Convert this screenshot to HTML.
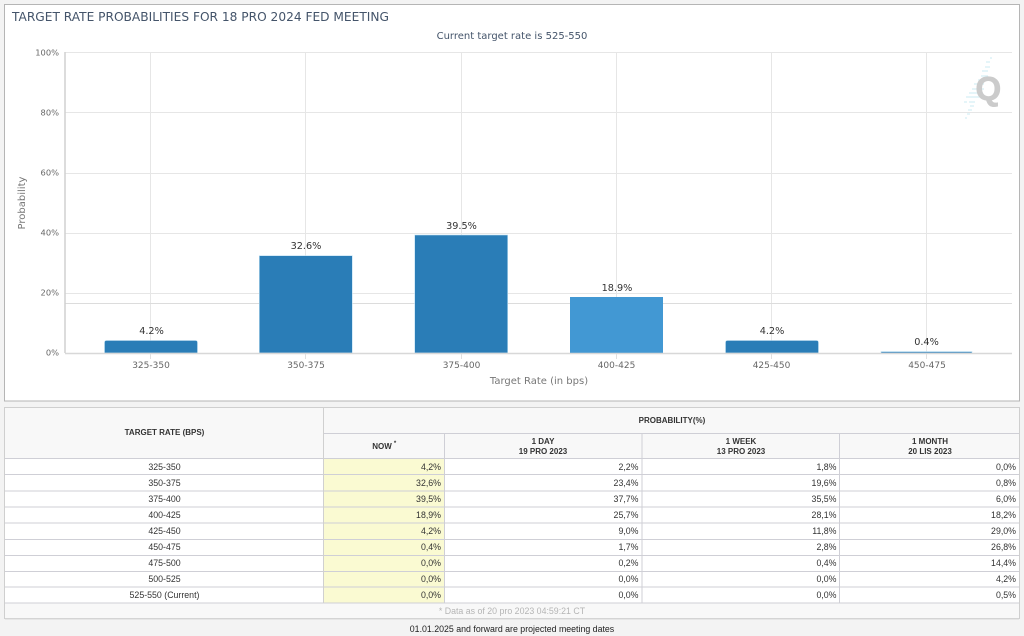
<!DOCTYPE html>
<html>
<head>
<meta charset="utf-8">
<style>
html,body{margin:0;padding:0;width:1024px;height:636px;overflow:hidden;background:#f3f3f3}
svg{display:block;filter:blur(.35px)}
.d{font-family:"DejaVu Sans",sans-serif}
.l{font-family:"Liberation Sans",sans-serif}
.r{font-size:8.8px;fill:#333;text-anchor:end;font-family:"Liberation Sans",sans-serif}
.c{font-size:8.8px;fill:#333;text-anchor:middle;font-family:"Liberation Sans",sans-serif}
.h{font-size:8px;font-weight:bold;fill:#333;text-anchor:middle;font-family:"Liberation Sans",sans-serif}
.y{font-size:8.3px;fill:#666;text-anchor:end;font-family:"DejaVu Sans",sans-serif}
.x{font-size:9px;fill:#666;text-anchor:middle;font-family:"DejaVu Sans",sans-serif}
.v{font-size:9.7px;fill:#333;text-anchor:middle;font-family:"DejaVu Sans",sans-serif}
</style>
</head>
<body>
<svg width="1024" height="636" viewBox="0 0 1024 636" xmlns="http://www.w3.org/2000/svg">
<rect x="0" y="0" width="1024" height="636" fill="#f3f3f3"/>
<!-- chart panel -->
<rect x="4.5" y="4.5" width="1015" height="396.5" fill="#fff" stroke="#b5b5b5"/>
<text class="d" x="12" y="21" font-size="12.2px" fill="#44546a">TARGET RATE PROBABILITIES FOR 18 PRO 2024 FED MEETING</text>
<text class="d" x="512" y="39" font-size="10px" fill="#44546a" text-anchor="middle">Current target rate is 525-550</text>
<!-- grid -->
<g stroke="#e6e6e6" stroke-width="1" fill="none">
<path d="M65 52.5H1012M65 112.5H1012M65 173.5H1012M65 233.5H1012M65 293.5H1012"/>
<path d="M150.5 52V353M305.5 52V353M461.5 52V353M616.5 52V353M771.5 52V353M926.5 52V353"/>
</g>
<path d="M65.5 303.5H1012" stroke="#dcdcdc" fill="none"/>
<path d="M65 52V353" stroke="#d0d0d0" stroke-width="1.5" fill="none"/>
<!-- watermark -->
<g stroke="#d5eff5" stroke-width="1.2" fill="none">
<path d="M990 58h2M986 62h4M985 67h5M982 71h6M981 76h7M978 80h7M974 84h10M972 89h12M969 93h14M966 97h14M964 102h3M969 102h6M970 106h4M968 110h4M967 114h3M965 118h2"/>
</g>
<text class="l" x="975.500" y="100" font-size="33px" font-weight="bold" fill="#cbcbcb" stroke="#cbcbcb" stroke-width=".8">Q</text>
<!-- bars -->
<g fill="#2a7db7" stroke="#bfe0f2" stroke-width=".6">
<path d="M104.5 353V342.5q0-2 2-2H195.5q2 0 2 2V353z"/>
<rect x="259.3" y="255.7" width="93" height="97.3"/>
<rect x="414.7" y="235" width="93" height="118"/>
<path d="M725.5 353V342.5q0-2 2-2H816.5q2 0 2 2V353z"/>
<rect x="881" y="351.6" width="91" height="1.4"/>
</g>
<rect x="570" y="297" width="93" height="56" fill="#4298d3"/>
<path d="M65 353.5H1012" stroke="#d8d8d8" stroke-width="1.5" fill="none"/>
<path d="M150.5 354v5M305.5 354v5M461.5 354v5M616.5 354v5M771.5 354v5M926.5 354v5" stroke="#e0e0e0" fill="none"/>
<!-- labels -->
<text class="v" x="151.500" y="334">4.2%</text>
<text class="v" x="306" y="249">32.6%</text>
<text class="v" x="461.5" y="229">39.5%</text>
<text class="v" x="617" y="291">18.9%</text>
<text class="v" x="772" y="334">4.2%</text>
<text class="v" x="926.5" y="345">0.4%</text>
<text class="y" x="59" y="55.500">100%</text>
<text class="y" x="59" y="115.500">80%</text>
<text class="y" x="59" y="175.500">60%</text>
<text class="y" x="59" y="235.500">40%</text>
<text class="y" x="59" y="295.500">20%</text>
<text class="y" x="59" y="355.500">0%</text>
<text class="x" x="151" y="368">325-350</text>
<text class="x" x="306" y="368">350-375</text>
<text class="x" x="461.5" y="368">375-400</text>
<text class="x" x="616.5" y="368">400-425</text>
<text class="x" x="771.5" y="368">425-450</text>
<text class="x" x="927" y="368">450-475</text>
<text class="d" x="539" y="384" font-size="10px" fill="#777" text-anchor="middle">Target Rate (in bps)</text>
<text class="d" transform="translate(25,203) rotate(-90)" font-size="10px" fill="#777" text-anchor="middle">Probability</text>
<!-- table -->
<rect x="4.5" y="407.5" width="1015" height="211" fill="#fff"/>
<rect x="5" y="408" width="1014" height="50.5" fill="#f8f8f8"/>
<rect x="5" y="603" width="1014" height="15.5" fill="#f8f8f8"/>
<rect x="324" y="459" width="120.5" height="144" fill="#fafad2"/>
<g stroke="#cfcfd6" fill="none">
<rect x="4.5" y="407.5" width="1015" height="211" stroke="#cfcfcf"/>
<path d="M324 433.5H1019"/>
<path d="M5 458.5H1019M5 474.5H1019M5 491H1019M5 507H1019M5 523H1019M5 539.5H1019M5 555.5H1019M5 571.5H1019M5 587H1019M5 603H1019" stroke-width="1.1"/>
<path d="M323.5 407V603M444.5 433V603M642 433V603M839.5 433V603"/>
</g>
<path d="M323.5 407V603" stroke="#d0d0d0" fill="none"/>
<path d="M5 619H1019" stroke="#d8d8d8" fill="none"/>
<text class="h" x="164.500" y="435">TARGET RATE (BPS)</text>
<text class="h" x="672" y="423">PROBABILITY(%)</text>
<text class="h" x="382" y="449">NOW</text>
<text class="h" x="395" y="445" style="font-size:6px">*</text>
<text class="h" x="543" y="444">1 DAY</text>
<text class="h" x="543" y="454">19 PRO 2023</text>
<text class="h" x="741" y="444">1 WEEK</text>
<text class="h" x="741" y="454">13 PRO 2023</text>
<text class="h" x="930" y="444">1 MONTH</text>
<text class="h" x="930" y="454">20 LIS 2023</text>

<text class="c" x="164.500" y="470">325-350</text><text class="r" x="441" y="470">4,2%</text><text class="r" x="638.500" y="470">2,2%</text><text class="r" x="836.500" y="470">1,8%</text><text class="r" x="1016" y="470">0,0%</text>
<text class="c" x="164.500" y="486">350-375</text><text class="r" x="441" y="486">32,6%</text><text class="r" x="638.500" y="486">23,4%</text><text class="r" x="836.500" y="486">19,6%</text><text class="r" x="1016" y="486">0,8%</text>
<text class="c" x="164.500" y="502">375-400</text><text class="r" x="441" y="502">39,5%</text><text class="r" x="638.500" y="502">37,7%</text><text class="r" x="836.500" y="502">35,5%</text><text class="r" x="1016" y="502">6,0%</text>
<text class="c" x="164.500" y="518">400-425</text><text class="r" x="441" y="518">18,9%</text><text class="r" x="638.500" y="518">25,7%</text><text class="r" x="836.500" y="518">28,1%</text><text class="r" x="1016" y="518">18,2%</text>
<text class="c" x="164.500" y="534">425-450</text><text class="r" x="441" y="534">4,2%</text><text class="r" x="638.500" y="534">9,0%</text><text class="r" x="836.500" y="534">11,8%</text><text class="r" x="1016" y="534">29,0%</text>
<text class="c" x="164.500" y="550">450-475</text><text class="r" x="441" y="550">0,4%</text><text class="r" x="638.500" y="550">1,7%</text><text class="r" x="836.500" y="550">2,8%</text><text class="r" x="1016" y="550">26,8%</text>
<text class="c" x="164.500" y="566">475-500</text><text class="r" x="441" y="566">0,0%</text><text class="r" x="638.500" y="566">0,2%</text><text class="r" x="836.500" y="566">0,4%</text><text class="r" x="1016" y="566">14,4%</text>
<text class="c" x="164.500" y="582">500-525</text><text class="r" x="441" y="582">0,0%</text><text class="r" x="638.500" y="582">0,0%</text><text class="r" x="836.500" y="582">0,0%</text><text class="r" x="1016" y="582">4,2%</text>
<text class="c" x="164.500" y="598">525-550 (Current)</text><text class="r" x="441" y="598">0,0%</text><text class="r" x="638.500" y="598">0,0%</text><text class="r" x="836.500" y="598">0,0%</text><text class="r" x="1016" y="598">0,5%</text>

<text class="c" x="512" y="614" style="fill:#b5b5b5">* Data as of 20 pro 2023 04:59:21 CT</text>
<text class="c" x="512" y="632" style="fill:#222">01.01.2025 and forward are projected meeting dates</text>
</svg>
</body>
</html>
